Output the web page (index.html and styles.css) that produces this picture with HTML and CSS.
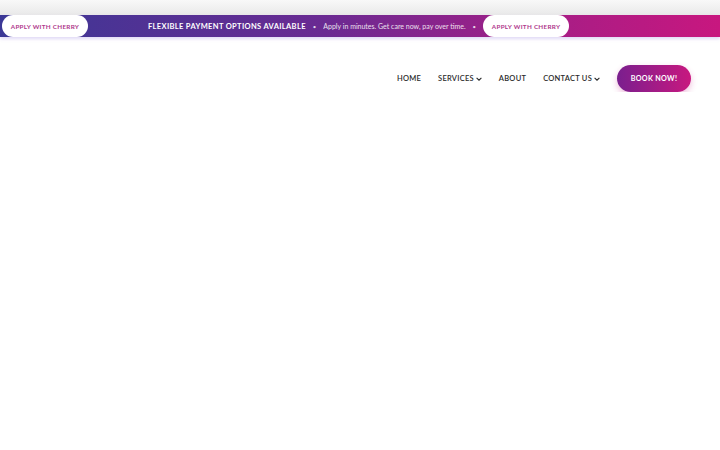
FILE: index.html
```html
<!DOCTYPE html>
<html lang="en">
<head>
    <meta charset="UTF-8">
    <meta name="viewport" content="width=device-width, initial-scale=1.0">
    <title>Book now</title>
    <link rel="stylesheet" href="styles.css">
</head>
<body>
    <div class="topband"></div>

    <!-- financing strip -->
    <div class="promo">
      <a class="pill" href="#">APPLY WITH CHERRY</a>
      <span class="promo-title">FLEXIBLE PAYMENT OPTIONS AVAILABLE</span>
      <span class="dot">&bull;</span>
      <span class="promo-sub">Apply in minutes. Get care now, pay over time.</span>
      <span class="dot">&bull;</span>
      <a class="pill" href="#">APPLY WITH CHERRY</a>
    </div>

    <header class="header">
      <nav class="nav">
        <a href="#">HOME</a>
        <a href="#">SERVICES <svg class="chev" viewBox="0 0 10 6"><path d="M1 1l4 4 4-4" /></svg></a>
        <a href="#">ABOUT</a>
        <a href="#">CONTACT US <svg class="chev" viewBox="0 0 10 6"><path d="M1 1l4 4 4-4" /></svg></a>
      </nav>
      <a class="book" href="#">BOOK NOW!</a>
    </header>
</body>
</html>
```

FILE: styles.css
```css
body {
  margin: 0;
  background: #fff;
  font-family: "Lato", "Open Sans", sans-serif;
}
a {
  text-decoration: none;
}
.topband {
  height: 15px;
  background: linear-gradient(#f8f8f8, #e9e9e9);
}
.promo {
  height: 22px;
  display: flex;
  align-items: center;
  padding-left: 2px;
  background: linear-gradient(90deg, #3b3896 0%, #6a2a92 45%, #a51e86 75%, #c8177f 100%);
  box-shadow: 0 2px 3px rgba(170, 150, 230, 0.35);
  color: #fff;
}
.pill {
  display: flex;
  align-items: center;
  justify-content: center;
  width: 86px;
  height: 22px;
  border-radius: 11px;
  background: #fff;
  color: #b0398c;
  font-size: 6.3px;
  font-weight: 700;
  letter-spacing: 0.3px;
}
.promo-title {
  margin-left: 60px;
  font-size: 7.5px;
  font-weight: 700;
  letter-spacing: 0.35px;
}
.dot {
  margin: 0 7px;
  font-size: 6px;
  opacity: 0.8;
}
.promo-sub {
  font-size: 7px;
  opacity: 0.85;
}
.header {
  display: flex;
  justify-content: flex-end;
  align-items: center;
  padding: 28px 29px 0 0;
}
.nav {
  display: flex;
  align-items: center;
  gap: 17px;
  margin-right: 17px;
}
.nav a {
  display: flex;
  align-items: center;
  gap: 2px;
  color: #2a2a2a;
  font-size: 7.5px;
  font-weight: 600;
  letter-spacing: 0.25px;
}
.chev {
  width: 6px;
  height: 4px;
  fill: none;
  stroke: #2a2a2a;
  stroke-width: 1.8;
}
.book {
  display: flex;
  align-items: center;
  justify-content: center;
  width: 74px;
  height: 27px;
  border-radius: 14px;
  background: linear-gradient(90deg, #7a1f8e, #c8187f);
  box-shadow: 0 3px 6px rgba(200, 40, 140, 0.3);
  color: #fff;
  font-size: 7.2px;
  font-weight: 700;
  letter-spacing: 0.3px;
}
```
